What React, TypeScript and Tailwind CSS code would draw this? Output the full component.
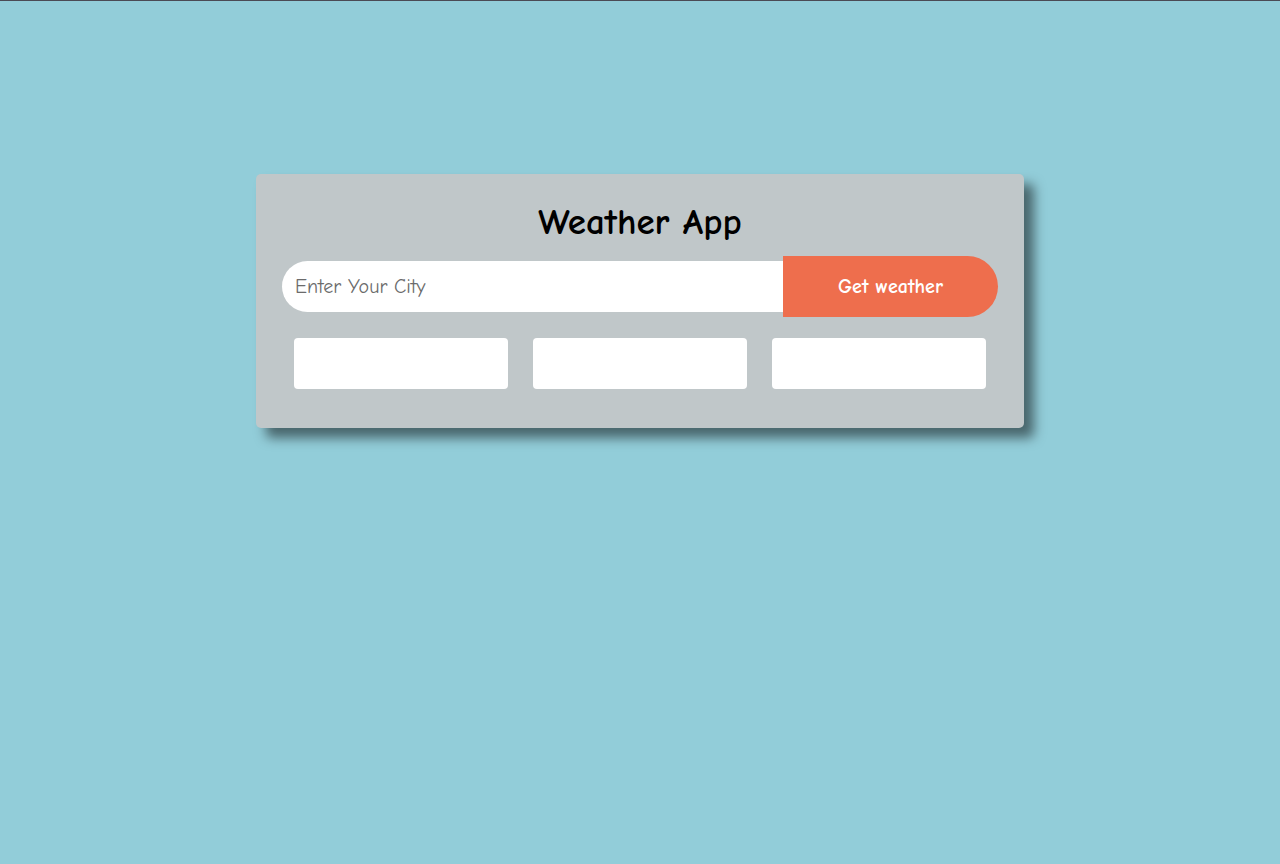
const App = () => {
  return (
    <div
      className="min-h-[864px] bg-[#92cdd9] border-t border-[#4a4a55]"
      style={{ fontFamily: '"Comic Sans MS", "Comic Neue", "DejaVu Sans", sans-serif' }}
    >
      <div className="mx-auto mt-[173px] w-[768px] rounded-[5px] bg-[#c0c7c9] px-[26px] pt-[24px] pb-[39px] shadow-[10px_10px_12px_rgba(0,0,0,0.5)]">
        <h1 className="text-center text-[37px] leading-[48px] font-bold text-black">
          Weather App
        </h1>

        <div className="mt-[10px] flex items-center">
          <input
            type="text"
            placeholder="Enter Your City"
            className="h-[51px] flex-1 rounded-l-[26px] bg-white pl-[13px] text-[20px] text-[#333] outline-none placeholder:text-[#6b6b6b]"
          />
          <button className="h-[61px] w-[215px] rounded-r-[31px] bg-[#ee6e4d] text-[20px] font-bold text-white">
            Get weather
          </button>
        </div>

        <div className="mt-[21px] flex justify-center gap-[25px]">
          <div className="h-[51px] w-[214px] rounded-[4px] bg-white" />
          <div className="h-[51px] w-[214px] rounded-[4px] bg-white" />
          <div className="h-[51px] w-[214px] rounded-[4px] bg-white" />
        </div>
      </div>
    </div>
  );
};

export default App;
